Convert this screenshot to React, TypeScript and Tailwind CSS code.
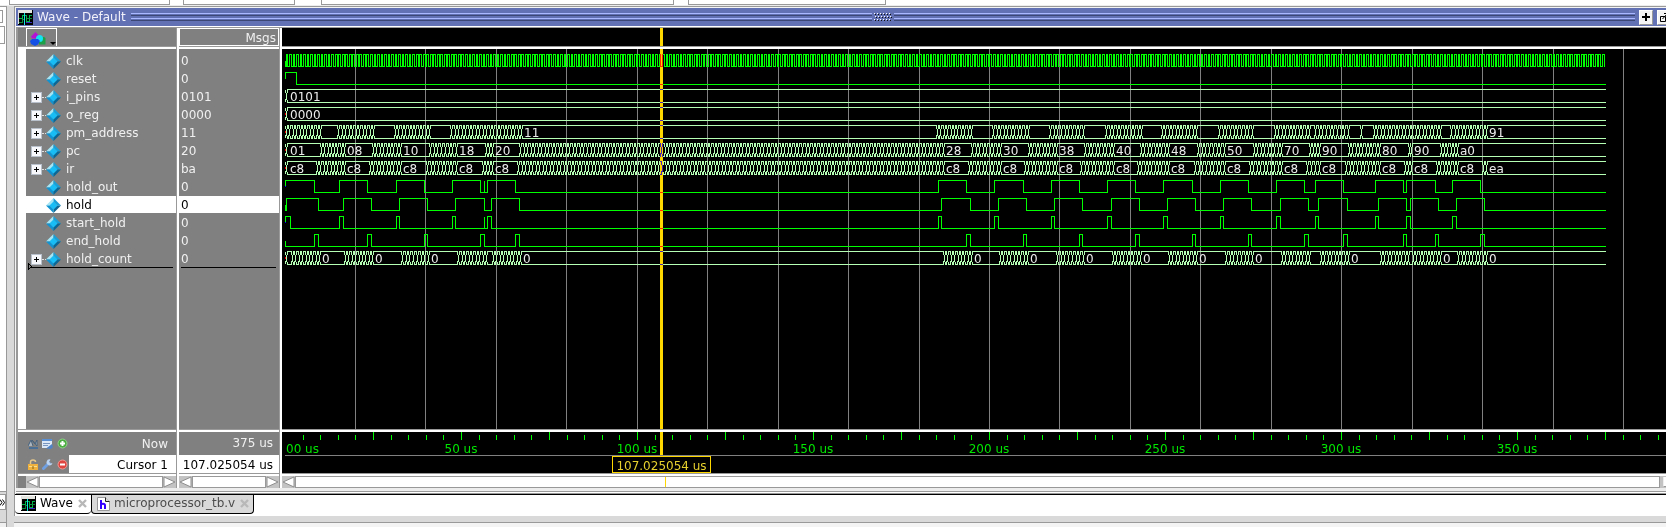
import React from "react";

type Span = [number, number, string?];
type Signal = { name: string; value: string; bus?: boolean; selected?: boolean };

const SIGNALS: Signal[] = [
  { name: "clk", value: "0" },
  { name: "reset", value: "0" },
  { name: "i_pins", value: "0101", bus: true },
  { name: "o_reg", value: "0000", bus: true },
  { name: "pm_address", value: "11", bus: true },
  { name: "pc", value: "20", bus: true },
  { name: "ir", value: "ba", bus: true },
  { name: "hold_out", value: "0" },
  { name: "hold", value: "0", selected: true },
  { name: "start_hold", value: "0" },
  { name: "end_hold", value: "0" },
  { name: "hold_count", value: "0", bus: true },
];

const T0 = 3;
const END = 1324;
const CURSOR_X = 378;
const GRID = [73, 143, 214, 284, 355, 425, 496, 566, 637, 707, 777, 848, 918, 989, 1059, 1130, 1200, 1271, 1341, 1411, 1482];

// Span columns are listed in window pixels; the wave pane begins at OX.
const OX = 282;
const rel = (spans: Span[]): Span[] => spans.map(([a, b, t]) => [a - OX, b - OX, t]);

const PM = rel([
  [320, 338], [373, 395], [429, 451], [521, 937, "11"], [971, 993], [1028, 1050], [1083, 1106], [1141, 1162],
  [1196, 1219], [1252, 1275], [1309, 1315], [1348, 1361], [1361, 1374], [1440, 1451], [1486, 1606, "91"],
]);
const PC = rel([
  [286, 321, "01"], [344, 373, "08"], [400, 430, "10"], [456, 486, "18"], [492, 520, "20"], [943, 972, "28"],
  [1000, 1029, "30"], [1056, 1085, "38"], [1113, 1141, "40"], [1168, 1198, "48"], [1224, 1254, "50"],
  [1281, 1310, "70"], [1319, 1349, "90"], [1379, 1409, "80"], [1411, 1441, "90"], [1457, 1606, "a0"],
]);
const IR = rel([
  [286, 317, "c8"], [344, 370, "c8"], [400, 427, "c8"], [456, 483, "c8"], [492, 518, "c8"], [943, 969, "c8"],
  [1000, 1025, "c8"], [1056, 1081, "c8"], [1113, 1138, "c8"], [1168, 1195, "c8"], [1224, 1250, "c8"],
  [1281, 1307, "c8"], [1319, 1346, "c8"], [1379, 1405, "c8"], [1411, 1437, "c8"], [1457, 1483, "c8"], [1486, 1606, "ea"],
]);
const COUNT = rel([
  [286, 292], [319, 345, "0"], [372, 402, "0"], [428, 458, "0"], [486, 493], [520, 944, "0"], [971, 1000, "0"],
  [1027, 1057, "0"], [1083, 1113, "0"], [1140, 1169, "0"], [1196, 1226, "0"], [1252, 1282, "0"], [1309, 1321],
  [1348, 1381, "0"], [1408, 1413], [1440, 1458, "0"], [1486, 1606, "0"],
]);
const HOLD_OUT = rel([
  [285, 314], [339, 367], [396, 424], [452, 480], [484, 484], [487, 515], [938, 966], [994, 1023], [1051, 1079],
  [1107, 1135], [1163, 1192], [1220, 1248], [1276, 1304], [1315, 1343], [1375, 1403], [1406, 1435], [1452, 1480],
]);
const HOLD = rel([
  [286, 318], [343, 371], [399, 427], [455, 484], [491, 519], [941, 970], [998, 1026], [1054, 1082],
  [1111, 1139], [1167, 1195], [1223, 1251], [1280, 1308], [1318, 1347], [1378, 1406], [1410, 1438], [1456, 1484],
]);
const START = rel([
  [285, 290], [339, 343], [396, 399], [452, 455], [484, 484], [487, 491], [938, 941], [994, 998], [1051, 1054],
  [1107, 1111], [1163, 1167], [1220, 1223], [1276, 1280], [1315, 1318], [1375, 1378], [1406, 1410], [1452, 1456],
]);
const END_HOLD = rel([
  [314, 318], [367, 371], [424, 427], [480, 484], [515, 519], [966, 970], [1023, 1026], [1079, 1082], [1135, 1139],
  [1192, 1195], [1248, 1251], [1304, 1308], [1343, 1347], [1403, 1406], [1435, 1438], [1480, 1484],
]);

function levelPath(spans: Span[], top: number) {
  const hi = top + 1.5;
  const lo = top + 13.5;
  let d = `M${T0 + 0.5} ${lo - 6}`;
  d += spans[0][0] > T0 + 1 ? `V${lo}` : "";
  for (const [a, b] of spans) {
    if (a <= T0) d += `V${hi}H${b + 0.5}V${lo}`;
    else d += `${a <= T0 + 1 ? `V${lo}` : ""}H${a + 0.5}V${hi}H${b + 0.5}V${lo}`;
  }
  return `${d}H${END}`;
}

function clockPath(top: number) {
  let d = `M${T0 + 0.5} ${top + 8}V${top + 13.5}`;
  let high = false;
  for (let x = T0 + 1; x < END - 1; x += 1.76) {
    const col = Math.floor(x) + 0.5;
    high = !high;
    d += `H${col}V${top + (high ? 1.5 : 13.5)}`;
  }
  return d;
}

function busPath(spans: Span[], top: number) {
  const edges: number[] = [T0 + 1];
  let prev = T0 + 1;
  for (const [a, b] of spans) {
    const n = Math.max(1, Math.round((a - prev) / 3.52));
    for (let i = 0; i < n; i++) {
      const e = Math.round(prev + ((a - prev) * i) / n);
      if (e > edges[edges.length - 1]) edges.push(e);
    }
    if (a > edges[edges.length - 1]) edges.push(a);
    prev = b;
  }
  edges.push(prev);
  let d = `M${T0 + 0.5} ${top + 1}V${top + 4}M${T0 + 0.5} ${top + 10}V${top + 13}`;
  for (let i = 0; i < edges.length - 1; i++) {
    const a = edges[i];
    const b = edges[i + 1];
    d += `M${a + 1} ${top + 0.5}H${b}M${a + 1} ${top + 13.5}H${b}`;
    d += `M${a + 0.5} ${top + 4}V${top + 11}`;
    d += `M${a + 1.5} ${top}V${top + 4}M${a + 1.5} ${top + 11}V${top + 14}`;
    if (i < edges.length - 2) d += `M${b - 0.5} ${top}V${top + 4}M${b - 0.5} ${top + 10}V${top + 13}`;
  }
  return d;
}

const BUSES: { row: number; spans: Span[] }[] = [
  { row: 2, spans: [[4, END, "0101"]] },
  { row: 3, spans: [[4, END, "0000"]] },
  { row: 4, spans: PM },
  { row: 5, spans: PC },
  { row: 6, spans: IR },
  { row: 11, spans: COUNT },
];
const LEVELS: { row: number; spans: Span[] }[] = [
  { row: 1, spans: [[T0, 14]] },
  { row: 7, spans: HOLD_OUT },
  { row: 8, spans: HOLD },
  { row: 9, spans: START },
  { row: 10, spans: END_HOLD },
];
const rowTop = (row: number) => 4 + row * 18;

function Waves() {
  return (
    <svg className="absolute inset-0 h-full w-full" aria-label="Waveforms" role="img">
      {GRID.map((x) => (
        <rect key={x} x={x} y="0" width="1" height="100%" fill="#808080" />
      ))}
      <g fill="none" strokeWidth="1" shapeRendering="crispEdges">
        <path d={clockPath(rowTop(0))} stroke="#00ff00" />
        {LEVELS.map((l) => (
          <path key={l.row} d={levelPath(l.spans, rowTop(l.row))} stroke="#00ff00" />
        ))}
        {BUSES.map((b) => (
          <path key={b.row} d={busPath(b.spans, rowTop(b.row))} stroke="#b4ffb4" />
        ))}
        {[3, 4, 5, 6, 11].map((r) => (
          <path key={r} d={`M3.5 ${rowTop(r) + 6}v2`} stroke="#ff0000" />
        ))}
        {[7, 9].map((r) => (
          <path key={r} d={`M3.5 ${rowTop(r) + 7}v1`} stroke="#0000ff" />
        ))}
      </g>
      <g fill="#ececec" className="text-[12px]">
        {BUSES.flatMap((b) =>
          b.spans
            .filter((s) => s[2])
            .map((s) => (
              <text key={`${b.row}-${s[0]}`} x={s[0] + (s[0] < 10 ? 4 : 3)} y={rowTop(b.row) + 12}>
                {s[2]}
              </text>
            ))
        )}
      </g>
      <rect x={CURSOR_X} y="0" width="3" height="100%" fill="#ffd700" className="mix-blend-difference" />
    </svg>
  );
}

function Timeline() {
  const ticks = Array.from({ length: 140 }, (_, i) => i + 1);
  return (
    <svg className="absolute inset-0 h-full w-full" aria-label="Timeline" role="img">
      <g fill="#00ff00">
        {ticks.map((i) => (
          <rect key={i} x={Math.round(3 + 17.6 * i)} y={i % 5 ? 3 : 0} width="1" height={i % 5 ? 5 : 8} />
        ))}
      </g>
      <rect x="3" y="23" width="100%" height="1" fill="#808080" />
      <g fill="#00e600" className="text-[12px]">
        <text x="4" y="21">00 us</text>
        {[50, 100, 150, 200, 250, 300, 350].map((t) => (
          <text key={t} x={3 + t * 3.52} y="21" textAnchor="middle">
            {t} us
          </text>
        ))}
      </g>
      <rect x={CURSOR_X} y="0" width="3" height="23" fill="#ffd700" />
      <rect x="330.5" y="24.5" width="98" height="16" fill="#000" stroke="#ffd700" />
      <text x="379.5" y="38" textAnchor="middle" fill="#e6d02e" className="text-[12px]">
        107.025054 us
      </text>
    </svg>
  );
}

function Diamond() {
  return (
    <svg width="15" height="15" viewBox="0 0 15 15" aria-hidden="true" className="shrink-0">
      <path d="M7.500 0L0 7.500H4L7.500 4Z" fill="#a6e6f4" />
      <path d="M7.500 0L15 7.500H11L7.500 4Z" fill="#1a9fd6" />
      <path d="M0 7.500L7.500 15V11L4 7.500Z" fill="#1193d2" />
      <path d="M15 7.500L7.500 15V11L11 7.500Z" fill="#0b6796" />
      <path d="M7.500 3.500L11.500 7.500L7.500 11.500L3.500 7.500Z" fill="#19bdf5" />
    </svg>
  );
}

function ScrollArrow({ right, label }: { right?: boolean; label: string }) {
  return (
    <button aria-label={label} className="h-3 w-[13px] shrink-0 bg-[#c3c3c3]">
      <svg width="13" height="12" viewBox="0 0 13 12" className={right ? "rotate-180" : ""} aria-hidden="true">
        <path d="M12 1V11L1 6Z" fill="#fff" stroke="#8e8e8e" />
      </svg>
    </button>
  );
}

function ScrollBar({ name, marker }: { name: string; marker?: boolean }) {
  return (
    <div className="flex h-3 min-w-0 flex-1 overflow-hidden bg-[#c3c3c3]">
      <ScrollArrow label={`Scroll ${name} left`} />
      <div className="relative min-w-0 flex-1 border border-[#999] bg-white">
        {marker && <span className="absolute left-[369px] top-0 h-[10px] w-px bg-[#ffd700]" />}
      </div>
      {marker ? (
        <button aria-label={`Scroll ${name} right`} className="h-3 w-[6px] shrink-0 bg-[#c3c3c3] py-px pl-[3px]">
          <span className="block h-[10px] border-b border-l border-b-[#999] border-l-[#eee] bg-white" />
        </button>
      ) : (
        <ScrollArrow right label={`Scroll ${name} right`} />
      )}
    </div>
  );
}

function Sash() {
  return <div className="h-[3px] shrink-0 border-t border-[#999] bg-white" />;
}

function WaveIcon() {
  return (
    <svg width="15" height="15" viewBox="0 0 15 15" aria-hidden="true" shapeRendering="crispEdges" className="shrink-0">
      <rect width="15" height="15" fill="#000" />
      <rect width="14" height="3" fill="#e4e4e0" />
      <path d="M0 14V0" stroke="#ddd" />
      <path d="M1 8.500H4.500V5.500H8V11.500H11V5.500H14" fill="none" stroke="#00b44a" />
      <path d="M1 12.500H4.500V9.500H7M9 8.500H14" fill="none" stroke="#0a8a3a" />
      <path d="M6.500 3V15" stroke="#12e4e4" />
      <path d="M8 12.500H14" stroke="#3a2fc0" />
    </svg>
  );
}

function FileIcon() {
  return (
    <svg width="13" height="14" viewBox="0 0 13 14" aria-hidden="true" className="shrink-0">
      <path d="M0.500 0.500H8.500L12.500 4.500V13.500H0.500Z" fill="#fff" stroke="#999" />
      <path d="M8.500 0.500V4.500H12.500" fill="#ddd" stroke="#222" />
      <path d="M4 3V12M4 8C4 6.500 8 6 8 8.500V12" fill="none" stroke="#3300ff" strokeWidth="2" />
    </svg>
  );
}

function SmallX() {
  return (
    <svg width="9" height="9" viewBox="0 0 9 9" aria-hidden="true">
      <path d="M1 1L8 8M8 1L1 8" stroke="#b8b8b8" strokeWidth="2.400" />
    </svg>
  );
}

function Grooves({ className }: { className: string }) {
  return (
    <div className={`flex flex-col gap-[2px] ${className}`}>
      <div className="h-[3px] border-b border-t border-b-[#3c4775] border-t-[#a9b8ff]" />
      <div className="h-[3px] border-b border-t border-b-[#3c4775] border-t-[#a9b8ff]" />
    </div>
  );
}

function TitleBar() {
  const dots = Array.from({ length: 6 }, (_, i) => i * 3);
  return (
    <header className="flex h-[18px] shrink-0 items-center bg-[#6270b4] pl-[2px] text-[#f2f2fa]">
      <WaveIcon />
      <h1 className="ml-1 whitespace-nowrap text-[12px] leading-[18px]">Wave - Default</h1>
      <Grooves className="ml-[5px] flex-1" />
      <svg width="18" height="9" viewBox="0 0 18 9" className="mx-[2px] shrink-0" aria-hidden="true" shapeRendering="crispEdges">
        {[0, 3, 6].map((y, r) =>
          dots.map((x) => (
            <g key={`${x}-${y}`}>
              <rect x={x + (r === 1 ? 1 : 0)} y={y} width="1" height="1" fill="#fff" />
              <rect x={x + (r === 1 ? 2 : 1)} y={y + 1} width="1" height="1" fill="#111" />
            </g>
          ))
        )}
      </svg>
      <Grooves className="flex-1" />
      <button aria-label="Zoom pane" className="ml-1 flex h-[15px] w-[14px] items-center justify-center border border-white border-b-[#999] border-r-[#999] bg-[#f4f4f4]">
        <svg width="8" height="8" viewBox="0 0 8 8" aria-hidden="true">
          <path d="M4 0V8M0 4H8" stroke="#000" strokeWidth="2" />
        </svg>
      </button>
      <button aria-label="Undock pane" className="ml-1 flex h-[15px] w-[9px] items-center overflow-hidden border border-r-0 border-white border-b-[#999] bg-[#f4f4f4] pl-[2px]">
        <svg width="9" height="10" viewBox="0 0 9 10" aria-hidden="true" className="shrink-0">
          <path d="M0.500 4.500H5.500V9.500H0.500ZM2.500 7L7.500 1.500M4 1.500H8" fill="none" stroke="#000" />
        </svg>
      </button>
    </header>
  );
}

function CursorTools({ now }: { now?: boolean }) {
  if (now)
    return (
      <div className="flex items-center gap-1">
        <button aria-label="Cursor names">
          <svg width="10" height="10" viewBox="0 0 10 10" aria-hidden="true">
            <path d="M0 7L3 1L5 7M4 1L7 5L9 1V7Z" fill="#aab4be" stroke="#46627c" />
            <path d="M1 9H10" stroke="#4a6f96" strokeWidth="2" />
          </svg>
        </button>
        <button aria-label="Edit grid and timeline">
          <svg width="11" height="10" viewBox="0 0 11 10" aria-hidden="true">
            <rect x="0" y="0" width="10" height="9" fill="#dce8f6" />
            <rect width="10" height="2" fill="#5b8fd4" />
            <path d="M1 4.500H8M1 6.500H6" stroke="#7896c0" />
            <path d="M4 9.500L10 5L11 8L9 10Z" fill="#4f83c6" />
          </svg>
        </button>
        <button aria-label="Add cursor">
          <svg width="11" height="11" viewBox="0 0 11 11" aria-hidden="true">
            <circle cx="5.500" cy="5.500" r="4.500" fill="#4cae42" stroke="#8fd08a" />
            <path d="M5.500 3V8M3 5.500H8" stroke="#fff" strokeWidth="2" />
          </svg>
        </button>
      </div>
    );
  return (
    <div className="flex items-center gap-1">
      <button aria-label="Lock cursor">
        <svg width="10" height="11" viewBox="0 0 10 11" aria-hidden="true">
          <path d="M2.500 6V3Q2.500 1 5 1T7.500 3" fill="none" stroke="#e8c88a" strokeWidth="1.500" />
          <rect y="5" width="10" height="6" fill="#f0b23c" />
          <path d="M1 7.500H9" stroke="#fbe08c" />
          <path d="M5 7V10" stroke="#8a6010" />
        </svg>
      </button>
      <button aria-label="Cursor properties">
        <svg width="11" height="11" viewBox="0 0 11 11" aria-hidden="true">
          <path d="M1.500 9.500L7 4" stroke="#6f9fe0" strokeWidth="3" strokeLinecap="round" />
          <path d="M8.500 0.500A3 3 0 1 0 10.500 4L8.500 4.500L7 3Z" fill="#b9d2f2" />
        </svg>
      </button>
      <button aria-label="Delete cursor">
        <svg width="11" height="11" viewBox="0 0 11 11" aria-hidden="true">
          <circle cx="5.500" cy="5.500" r="4.500" fill="#e04640" stroke="#f09a94" />
          <path d="M3 5.500H8" stroke="#fff" strokeWidth="2" />
        </svg>
      </button>
    </div>
  );
}

function NamesPane() {
  return (
    <section className="flex w-[158px] shrink-0 flex-col bg-[#808080]">
      <div className="h-[18px] shrink-0 pl-2">
        <button aria-label="Signal options" className="flex h-[18px] w-[31px] items-end gap-1 border border-b-0 border-white pl-[3px]">
          <svg width="16" height="14" viewBox="0 0 16 14" aria-hidden="true" className="shrink-0">
            <path d="M1 4.500L5.500 0L10 4.500L8 6.500H2Z" fill="#b414d2" />
            <path d="M9 5H14L15.500 6V12.500H9Z" fill="#1ca048" />
            <circle cx="9.500" cy="6.500" r="3.500" fill="#12e2f2" />
            <path d="M0 9L2 7H8L10 9L8 12.500L5 14L1 12Z" fill="#1450e6" />
          </svg>
          <svg width="6" height="4" viewBox="0 0 6 4" aria-hidden="true" className="shrink-0">
            <path d="M0 0H6L3 3Z" fill="#000" />
          </svg>
        </button>
      </div>
      <Sash />
      <div className="flex min-h-[220px] flex-1 border-l-8 border-white">
        <div className="relative flex-1 pt-[3px]">
          <ul>
            {SIGNALS.map((s) => (
              <li key={s.name} className="h-[18px]">
                <div className={`flex h-[17px] items-center pl-[5px] pt-px ${s.selected ? "bg-white text-black" : "text-[#f0f0f0]"}`}>
                  <span className="flex w-[15px] items-center">
                    {s.bus && (
                      <>
                        <button aria-label={`Expand ${s.name}`} className="flex h-[11px] w-[11px] items-center justify-center border border-[#b8c0cc] bg-[#f6f8fc]">
                          <svg width="5" height="5" viewBox="0 0 5 5" aria-hidden="true" shapeRendering="crispEdges">
                            <path d="M2.500 0V5M0 2.500H5" stroke="#000" />
                          </svg>
                        </button>
                        <span className="w-1 border-t border-dotted border-[#e0e0e0]" />
                      </>
                    )}
                  </span>
                  <Diamond />
                  <span className="ml-[5px] text-[12px] leading-[18px]">{s.name}</span>
                </div>
              </li>
            ))}
          </ul>
          <svg className="absolute left-[2px] top-[214px]" width="146" height="7" viewBox="0 0 146 7" aria-hidden="true" shapeRendering="crispEdges">
            <path d="M0.500 0.500V6.500L3.500 3.500Z" fill="none" stroke="#000" />
            <path d="M3 4.500H145" stroke="#000" />
          </svg>
        </div>
      </div>
      <Sash />
      <div className="h-[41px] shrink-0 text-[12px]">
        <div className="flex h-[23px] items-center justify-between pl-[10px] pr-2 text-[#f0f0f0]">
          <CursorTools now />
          <span className="leading-[24px]">Now</span>
        </div>
        <div className="flex h-[18px] items-center pl-[10px]">
          <CursorTools />
          <span className="ml-px flex-1 bg-white pr-2 pt-[2px] text-right leading-4 text-black">Cursor 1</span>
        </div>
      </div>
      <Sash />
      <div className="flex pl-2">
        <ScrollBar name="names" />
      </div>
    </section>
  );
}

function ValuesPane() {
  return (
    <section className="flex w-[100px] shrink-0 flex-col bg-[#808080] text-[12px]">
      <h2 className="h-[18px] shrink-0 border border-white pr-[2px] text-right leading-[19px] text-[#f0f0f0]">Msgs</h2>
      <Sash />
      <div className="min-h-[220px] flex-1 pt-[3px]">
        <ul>
          {SIGNALS.map((s) => (
            <li key={s.name} className="h-[18px]">
              <div className={`h-[17px] pl-[2px] leading-[19px] ${s.selected ? "bg-white text-black" : "text-[#f0f0f0]"}`}>{s.value}</div>
            </li>
          ))}
        </ul>
        <div className="-mt-px ml-[2px] mr-[3px] h-px bg-black" />
      </div>
      <Sash />
      <div className="h-[41px] shrink-0 whitespace-nowrap text-right">
        <div className="h-[23px] pr-[6px] leading-[23px] text-[#f0f0f0]">375 us</div>
        <div className="flex h-[18px] justify-end bg-white pr-[6px] pt-[2px] leading-4 text-black">107.025054 us</div>
      </div>
      <Sash />
      <div className="flex">
        <ScrollBar name="values" />
      </div>
    </section>
  );
}

function WavePane() {
  return (
    <section className="flex min-w-0 flex-1 flex-col bg-black">
      <div className="h-[18px] shrink-0 pl-[378px]">
        <div className="h-full w-[3px] bg-[#ffd700]" />
      </div>
      <Sash />
      <div className="relative min-h-[220px] flex-1 bg-black">
        <Waves />
      </div>
      <Sash />
      <div className="relative h-[41px] shrink-0">
        <Timeline />
      </div>
      <Sash />
      <div className="flex">
        <ScrollBar name="waves" marker />
      </div>
    </section>
  );
}

function VerticalSash() {
  return <div className="w-[3px] shrink-0 border-l border-[#999] bg-white" />;
}

function Tabs() {
  return (
    <nav className="flex h-[22px] shrink-0 items-start border-t border-black bg-white text-[12px]">
      <div className="flex h-[19px] items-center rounded-b border-b border-black bg-white pb-px pl-[6px] pr-1">
        <a href="#wave" className="flex items-center gap-1 leading-4 text-black">
          <WaveIcon />
          <span className="pb-[2px]">Wave</span>
        </a>
        <button aria-label="Close Wave" className="ml-[5px] flex">
          <SmallX />
        </button>
      </div>
      <div className="flex h-[19px] items-center rounded-b border border-t-0 border-black bg-[#d9d9d9] pb-px pl-[5px] pr-1">
        <a href="#microprocessor_tb" className="flex items-center gap-1 leading-4 text-[#4c4c4c]">
          <FileIcon />
          <span className="pb-[2px]">microprocessor_tb.v</span>
        </a>
        <button aria-label="Close microprocessor_tb.v" className="ml-[5px] flex">
          <SmallX />
        </button>
      </div>
    </nav>
  );
}

function ToolbarEdge() {
  return (
    <div className="flex h-[5px] shrink-0 bg-white pl-[9px]">
      <div className="w-[161px] border-b border-l border-r border-[#999]" />
      <div className="ml-[13px] w-[112px] border-b border-l border-r border-[#999]" />
      <div className="ml-[26px] w-[353px] border-b border-l border-r border-[#999]" />
      <div className="ml-[14px] w-[198px] border-b border-l border-r border-[#999]" />
    </div>
  );
}

export default function App() {
  return (
    <div className="flex min-h-screen flex-col overflow-hidden bg-white font-['DejaVu_Sans',sans-serif]">
      <ToolbarEdge />
      <div className="flex flex-1 border-t border-[#ededed]">
        <aside className="flex w-[7px] shrink-0 flex-col border-r border-t border-[#999] bg-white">
          <div className="mt-[3px] h-[13px] w-[3px] border border-l-0 border-[#999]" />
          <div className="mt-[3px] h-[18px] w-[5px] border border-l-0 border-[#999]" />
          <div className="flex-1" />
          <div className="h-[3px] border-t border-[#999] bg-[#d9d9d9]" />
          <button aria-label="More tabs" className="flex h-4 items-center border border-l-0 border-[#999]">
            <svg width="5" height="7" viewBox="0 0 5 7" aria-hidden="true">
              <path d="M0 0.500L2 3.500L0 6.500M2.500 0.500L4.500 3.500L2.500 6.500" fill="none" stroke="#000" />
            </svg>
          </button>
          <div className="h-3 bg-[#d9d9d9]" />
          <div className="h-[5px] border-t border-[#999] bg-[#f0f0f0]" />
        </aside>
        <div className="flex min-w-0 flex-1 flex-col border-l-[7px] border-[#d9d9d9]">
          <main className="flex min-w-0 flex-1 flex-col border-l border-t border-[#999]">
            <div className="flex min-w-0 flex-1 flex-col border-l border-t border-[#f4f4f4]">
              <TitleBar />
              <div className="h-[2px] shrink-0 border-b border-[#999] bg-white" />
              <div className="flex min-w-0 flex-1 border-l-2 border-[#999]">
                <NamesPane />
                <VerticalSash />
                <ValuesPane />
                <VerticalSash />
                <WavePane />
              </div>
              <div className="h-[3px] shrink-0 bg-[#ededed]" />
              <div className="h-[2px] shrink-0 border-t border-[#999] bg-white" />
              <div className="h-px shrink-0 bg-[#999]" />
            </div>
            <Tabs />
          </main>
          <div className="h-[6px] shrink-0 bg-[#d9d9d9]" />
          <div className="h-[5px] shrink-0 border-t border-[#999] bg-[#f4f4f4]" />
        </div>
      </div>
    </div>
  );
}
